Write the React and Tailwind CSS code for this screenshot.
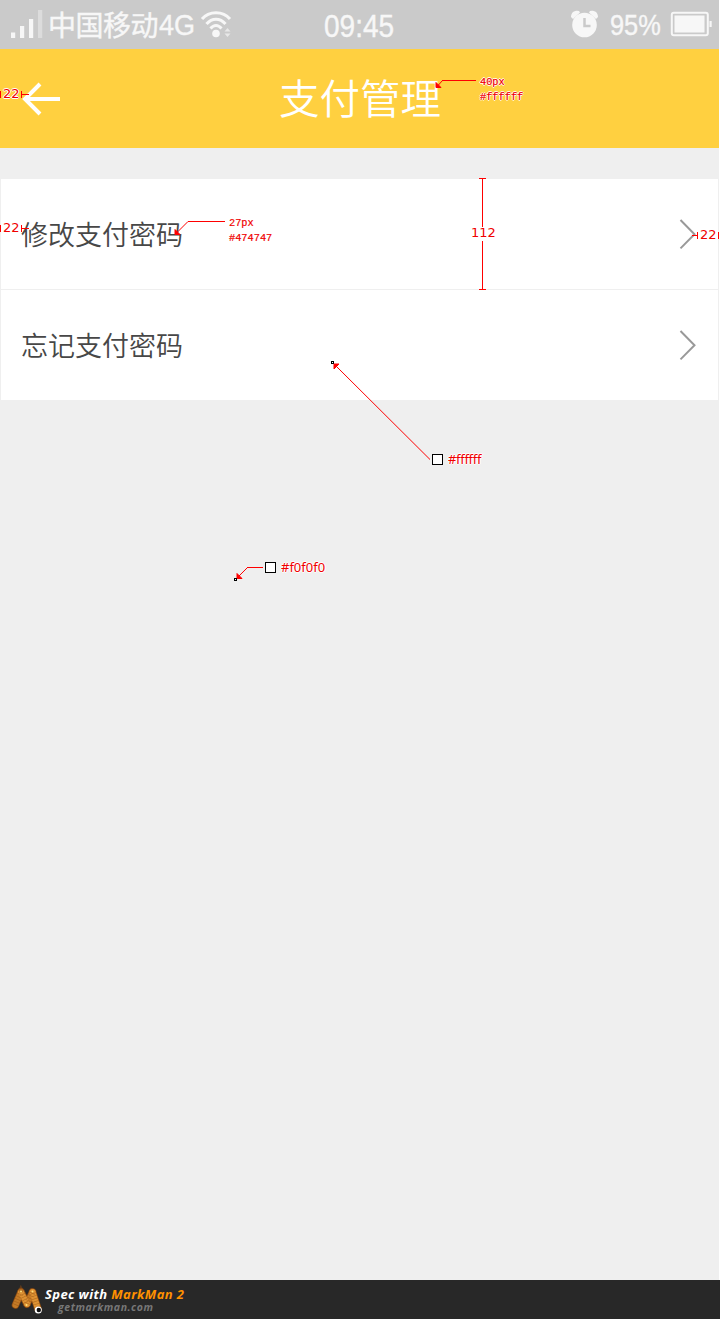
const cjk = "font-['Noto_Sans_CJK_SC','Liberation_Sans',sans-serif]";
const halo = "[text-shadow:1px_0_#fff,-1px_0_#fff,0_1px_#fff,0_-1px_#fff]";

function StatusBar() {
  return (
    <div className="flex h-[49px] items-center bg-[#cacaca] pl-[10px] pr-[6px] text-[#f7f7f7] [-webkit-text-stroke:0.4px_#f7f7f7]">
      <div className="flex w-[308px] items-center">
        <svg className="h-[49px] w-[37px] shrink-0" viewBox="10 0 37 49" fill="#f7f7f7">
          <rect x="11" y="32.500" width="4.200" height="5.500" />
          <rect x="20" y="26" width="4.200" height="12" />
          <rect x="29" y="19" width="4.200" height="19" />
          <rect x="38" y="10" width="4.200" height="28" opacity=".4" />
        </svg>
        <span className="ml-px w-[111px] shrink-0 whitespace-nowrap font-['Noto_Sans_CJK_SC',sans-serif] text-[28px] leading-[49px] tracking-[-0.5px]">中国移动</span>
        <span className="w-[41px] shrink-0 origin-left scale-x-[0.9] font-['Liberation_Sans',sans-serif] text-[30px] leading-[51px]">4G</span>
        <svg className="h-[49px] w-[34px] shrink-0" viewBox="200 0 34 49" fill="none" stroke="#f7f7f7" strokeWidth="3">
          <path d="M202 19C209 10.500 223 10.500 230 19" />
          <path d="M206.500 24C212 17.500 220 17.500 225.500 24" />
          <path d="M210.500 28.500C214 24.500 218 24.500 221.500 28.500" />
          <circle cx="216" cy="33.500" r="3.800" fill="#f7f7f7" stroke="none" />
          <path d="M224.500 31.500L227.500 28L230.500 31.500ZM224.500 33.500H230.500L227.500 37Z" fill="#f7f7f7" stroke="none" opacity=".65" />
        </svg>
      </div>
      <span className="w-[86px] origin-left translate-x-[6px] scale-x-[0.89] pt-[4px] font-['Liberation_Sans',sans-serif] text-[31.500px] leading-[49px]">09:45</span>
      <div className="ml-auto flex items-center">
        <svg className="h-[49px] w-[30px]" viewBox="570 0 30 49" fill="#f7f7f7">
          <circle cx="584.500" cy="25" r="12.300" />
          <path d="M571 17A6 6 0 0 1 579 11L580 12.500L573 19ZM598 17A6 6 0 0 0 590 11L589 12.500L596 19Z" />
          <path d="M584.500 18V26H590.500" fill="none" stroke="#cacaca" strokeWidth="2.500" />
        </svg>
        <span className="ml-[10px] w-[60px] origin-left scale-x-[0.86] font-['Liberation_Sans',sans-serif] text-[29.500px] leading-[46px]">95%</span>
        <svg className="h-[49px] w-[43px]" viewBox="670 0 43 49">
          <rect x="671.800" y="12.800" width="36" height="22.400" rx="2" fill="none" stroke="#f7f7f7" strokeWidth="2" />
          <rect x="674.500" y="15.500" width="30" height="17" fill="#f7f7f7" />
          <rect x="709.500" y="21" width="2.200" height="6" fill="#f7f7f7" />
        </svg>
      </div>
    </div>
  );
}

function Row({ label }) {
  return (
    <div className="flex h-[110px] items-center justify-between bg-white pl-[20px] pr-[22px]">
      <span className={`${cjk} mb-px text-[27px] font-[350] leading-[39px] text-[#474747]`}>{label}</span>
      <svg className="h-[32px] w-[18px]" viewBox="0 0 18 32" fill="none" stroke="#999" strokeWidth="2">
        <path d="M2.500 2L16.500 16.200L2.500 30.400" />
      </svg>
    </div>
  );
}

const tiny = "absolute whitespace-nowrap text-[#f00000]";

function Annotations() {
  return (
    <div className="pointer-events-none absolute inset-0">
      <svg className="absolute inset-0 h-full w-full" viewBox="0 0 720 1319" fill="none" stroke="#f00" strokeWidth="1">
        <path shapeRendering="crispEdges" d="M.5 91V98M21.500 91V98M22 94.500H29M.5 225V232M21.500 225V232M22 228.500H29M692 235.500H697M697.500 232V239M718.500 232V239M479 178.500H486M482.500 178V227M482.500 241V290M479 289.500H486M442 80.500H476M188 221.500H225M247 567.500H263" />
        <path d="M442.500 80.500L438 85.500M188 221.500L177 232.500M247.500 567.500L239 576M430 459.500L336 366" />
        <path d="M436 82.500V87.500H441ZM175 229.500V234.500H180ZM237 573.500V578.500H242ZM334 364V369L339 364Z" fill="#f00" />
        <g shapeRendering="crispEdges" stroke="#000" fill="#fff">
          <rect x="331.500" y="361.500" width="2" height="2" />
          <rect x="234.500" y="578.500" width="2" height="2" />
          <rect x="432.500" y="454.500" width="10" height="10" />
          <rect x="265.500" y="562.500" width="10" height="10" />
        </g>
      </svg>
      <div className="font-['DejaVu_Sans',sans-serif] text-[13px] leading-[16px]">
        <span className={`${tiny} ${halo} left-[3px] top-[86px]`}>22</span>
        <span className={`${tiny} ${halo} left-[3px] top-[220px]`}>22</span>
        <span className={`${tiny} ${halo} left-[700px] top-[227px]`}>22</span>
        <span className={`${tiny} ${halo} left-[471px] top-[225px]`}>112</span>
      </div>
      <div className="font-['Noto_Sans','Open_Sans',sans-serif] text-[13px] leading-[16px]">
        <span className={`${tiny} ${halo} left-[448px] top-[451px] tracking-[-0.3px]`}>#ffffff</span>
        <span className={`${tiny} ${halo} left-[281px] top-[559px]`}>#f0f0f0</span>
      </div>
      <div className="font-['Liberation_Mono',monospace] text-[10.300px] leading-[15px] [-webkit-text-stroke:0.2px_#f00000]">
        <span className={`${tiny} ${halo} left-[480px] top-[75px]`}>40px</span>
        <span className={`${tiny} ${halo} left-[480px] top-[90px]`}>#ffffff</span>
        <span className={`${tiny} ${halo} left-[229px] top-[216px]`}>27px</span>
        <span className={`${tiny} ${halo} left-[229px] top-[231px]`}>#474747</span>
      </div>
    </div>
  );
}

function Logo() {
  return (
    <svg className="h-[39px] w-[34px] shrink-0" viewBox="10 0 34 39" fill="none" strokeLinecap="round">
      <path d="M15.500 25L21 12M27 24L32.500 12M21 12L27 24M32.500 12L38 29" stroke="#8a4a12" strokeWidth="7.500" />
      <path d="M15.500 25L21 12M27 24L32.500 12" stroke="#c47a26" strokeWidth="6" />
      <path d="M21 12L27 24M32.500 12L38 29" stroke="#dd9233" strokeWidth="6" />
      <path d="M15.500 25L21 12L27 24L32.500 12L38 29" stroke="#8a4a12" strokeWidth="6" strokeDasharray=".6 2.200" strokeLinecap="butt" opacity=".55" />
      <g fill="#ffe07a">
        <circle cx="21" cy="11.500" r="1" />
        <circle cx="32.500" cy="11.500" r="1" />
        <circle cx="26.500" cy="25" r="1" />
      </g>
      <circle cx="38.300" cy="30" r="3.500" fill="#fff" />
      <circle cx="38.800" cy="30" r="2.200" fill="#111" />
    </svg>
  );
}

export default function App() {
  return (
    <div className="relative flex h-[1319px] w-[720px] flex-col overflow-hidden bg-[#efefef]">
      <div className="flex flex-1 flex-col border-r border-white">
        <StatusBar />
        <header className="flex h-[99px] items-center bg-[#ffd040]">
          <svg className="ml-[22px] h-[34px] w-[38px]" viewBox="0 0 38 34" fill="none" stroke="#fff" strokeWidth="4">
            <path d="M18 2L3 17L18 32M3 17H38" />
          </svg>
          <h1 className={`${cjk} mb-[4px] ml-[219px] text-[40.500px] font-[350] leading-[60px] text-white`}>支付管理</h1>
        </header>
        <main className="flex flex-1 flex-col gap-px px-px pt-[31px]">
          <Row label="修改支付密码" />
          <Row label="忘记支付密码" />
        </main>
      </div>
      <footer className="flex h-[39px] items-center bg-[#282828] pl-[10px] font-['Open_Sans',sans-serif] font-bold italic">
        <Logo />
        <div className="flex flex-col">
          <p className="ml-px text-[13px] leading-[14px] tracking-[0.4px] text-white">Spec with <span className="text-[#ff9100]">MarkMan 2</span></p>
          <p className="ml-[14px] text-[10.500px] leading-[12px] tracking-[0.55px] text-[#777]">getmarkman.com</p>
        </div>
      </footer>
      <Annotations />
    </div>
  );
}
